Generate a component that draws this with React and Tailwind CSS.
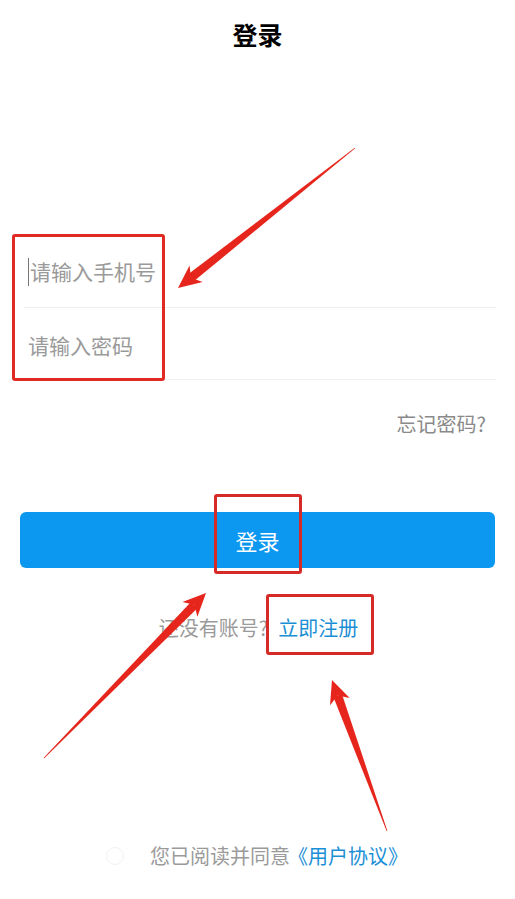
import React from "react";

function Arrow({ x1, y1, x2, y2, head = 23, hw = 10.5, bw = 4.5 }) {
  const dx = x2 - x1;
  const dy = y2 - y1;
  const len = Math.hypot(dx, dy);
  const ux = dx / len;
  const uy = dy / len;
  const nx = -uy;
  const ny = ux;
  const bx = x2 - ux * head;
  const by = y2 - uy * head;
  const notchX = x2 - ux * head * 0.72;
  const notchY = y2 - uy * head * 0.72;
  const p = (x, y) => `${x.toFixed(1)},${y.toFixed(1)}`;
  const body = [
    p(x1 + nx * 0.4, y1 + ny * 0.4),
    p(notchX + nx * bw, notchY + ny * bw),
    p(notchX - nx * bw, notchY - ny * bw),
    p(x1 - nx * 0.4, y1 - ny * 0.4),
  ].join(" ");
  const tip = [
    p(x2, y2),
    p(bx + nx * hw, by + ny * hw),
    p(notchX, notchY),
    p(bx - nx * hw, by - ny * hw),
  ].join(" ");
  return (
    <g fill="#e6261c">
      <polygon points={body} />
      <polygon points={tip} />
    </g>
  );
}

export default function App() {
  return (
    <div
      className="relative w-[515px] h-[899px] bg-white overflow-hidden"
      style={{ fontFamily: '"Noto Sans CJK SC", "Noto Sans", sans-serif' }}
    >
      <div className="flex flex-col">
        <div className="pt-[17px] h-[54px] flex justify-center">
          <h1 className="text-[25px] leading-[34px] font-bold text-black">登录</h1>
        </div>

        <div className="mt-[182px] ml-[24px] mr-[19px] flex flex-col">
          <div className="h-[72px] flex items-center border-b border-[#eeeeee] pl-[4px]">
            <span className="w-[1px] h-[28px] bg-[#777] mr-[1px]"></span>
            <span className="text-[21px] text-[#9a9a9a] leading-none">请输入手机号</span>
          </div>
          <div className="h-[72px] flex items-center border-b border-[#f1f1f1] pl-[4px] pt-[4px]">
            <span className="text-[21px] text-[#9a9a9a] leading-none">请输入密码</span>
          </div>
        </div>

        <div className="mt-[34px] mr-[29px] flex justify-end">
          <span className="text-[20px] text-[#8a8a8a] leading-none">忘记密码?</span>
        </div>

        <div className="mt-[78px] mx-[20px] h-[56px] rounded-[6px] bg-[#0c98f1] flex items-center justify-center">
          <span className="text-[22px] text-white leading-none">登录</span>
        </div>

        <div className="mt-[50px] flex justify-center items-center pl-[2px]">
          <span className="text-[20px] text-[#9a9a9a] leading-none">还没有账号?</span>
          <span className="text-[20px] text-[#1b8fd6] leading-none ml-[10px]">立即注册</span>
        </div>

        <div className="mt-[208px] flex items-center pl-[106px]">
          <span className="w-[18px] h-[18px] rounded-full border border-[#f2f2f2]"></span>
          <span className="ml-[26px] text-[20px] text-[#9a9a9a] leading-none">您已阅读并同意</span>
          <span className="text-[20px] text-[#1b8fd6] leading-none -ml-[2px]">《用户协议》</span>
        </div>
      </div>

      <div className="absolute left-[12px] top-[234px] w-[153px] h-[147px] border-[3px] border-[#e02a23] rounded-[3px]"></div>
      <div className="absolute left-[214px] top-[494px] w-[88px] h-[80px] border-[3px] border-[#d62a27] rounded-[3px]"></div>
      <div className="absolute left-[266px] top-[594px] w-[108px] h-[61px] border-[3px] border-[#d62a27] rounded-[3px]"></div>

      <svg className="absolute inset-0" width="515" height="899" viewBox="0 0 515 899">
        <Arrow x1={355} y1={148} x2={178} y2={288} />
        <Arrow x1={44} y1={758} x2={206} y2={593} />
        <Arrow x1={387} y1={831} x2={332} y2={680} />
      </svg>
    </div>
  );
}
